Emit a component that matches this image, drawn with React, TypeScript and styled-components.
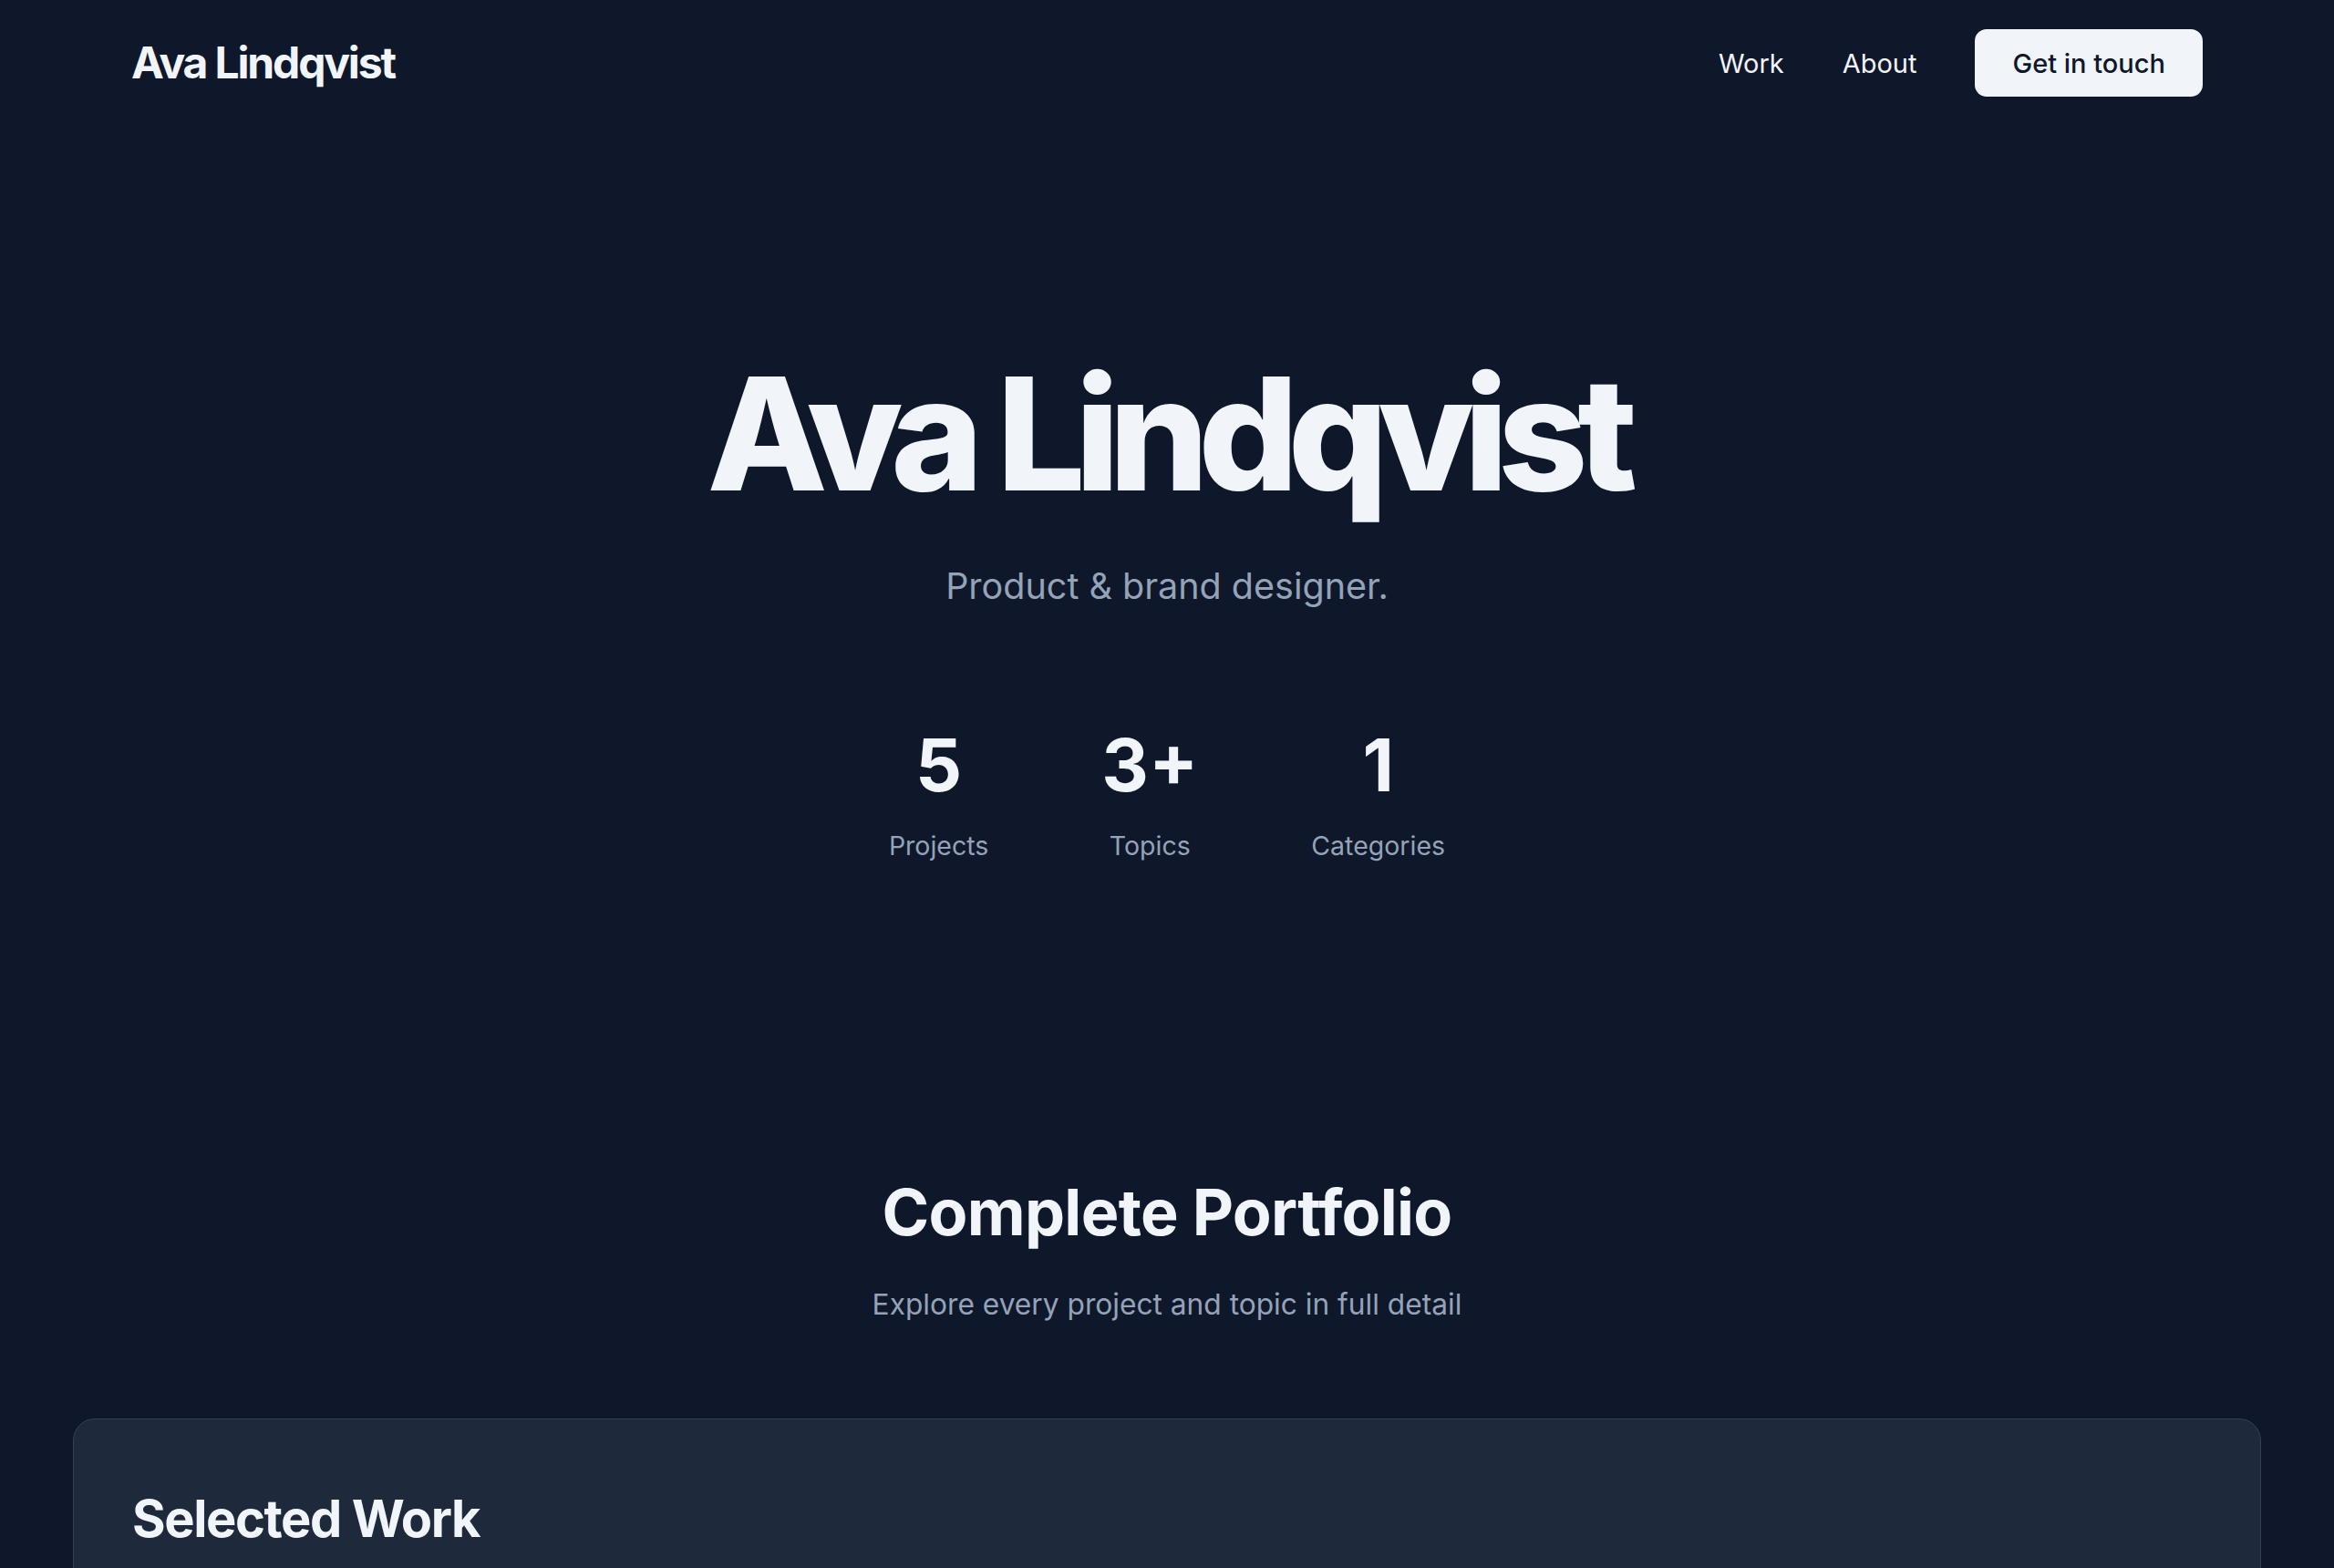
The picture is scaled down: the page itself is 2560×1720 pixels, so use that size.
import styled, { createGlobalStyle } from 'styled-components'

const GlobalStyle = createGlobalStyle`
  * {
    box-sizing: border-box;
  }
  html, body {
    margin: 0;
    padding: 0;
    background: #0f172a;
  }
  body {
    font-family: Inter, "Noto Sans", "Liberation Sans", sans-serif;
    color: #f1f5f9;
    -webkit-font-smoothing: antialiased;
  }
`

const Page = styled.div`
  height: 100vh;
  overflow: hidden;
  background: #0f172a;
`

const Header = styled.header`
  display: flex;
  align-items: center;
  justify-content: space-between;
  height: 138px;
  padding: 0 144px;
`

const Logo = styled.a`
  font-size: 48px;
  line-height: 1;
  font-weight: 700;
  letter-spacing: -0.045em;
  color: #f1f5f9;
  text-decoration: none;
`

const Nav = styled.nav`
  display: flex;
  align-items: center;
  gap: 64px;
`

const NavLink = styled.a`
  font-size: 29px;
  line-height: 1;
  color: #f1f5f9;
  text-decoration: none;
`

const ContactButton = styled.button`
  font-family: inherit;
  font-size: 29px;
  font-weight: 500;
  line-height: 1;
  color: #0f172a;
  background: #f1f5f9;
  border: none;
  border-radius: 13px;
  height: 74px;
  padding: 0 41px;
  cursor: pointer;
`

const Hero = styled.section`
  display: flex;
  flex-direction: column;
  align-items: center;
  padding-top: 251px;
`

const HeroTitle = styled.h1`
  margin: 0;
  font-size: 172px;
  line-height: 1;
  font-weight: 800;
  letter-spacing: -0.066em;
  color: #f1f5f9;
`

const Tagline = styled.p`
  margin: 63px 0 0;
  font-size: 39.5px;
  line-height: 1;
  color: #94a3b8;
`

const Stats = styled.div`
  display: flex;
  gap: 124px;
  margin-top: 135px;
`

const Stat = styled.div`
  display: flex;
  flex-direction: column;
  align-items: center;
`

const StatValue = styled.span`
  font-size: 80px;
  line-height: 1;
  font-weight: 700;
  color: #f1f5f9;
`

const StatLabel = styled.span`
  margin-top: 35px;
  font-size: 28.5px;
  line-height: 1;
  color: #94a3b8;
`

const Portfolio = styled.section`
  display: flex;
  flex-direction: column;
  align-items: center;
  padding: 353px 80px 0;
`

const SectionTitle = styled.h2`
  margin: 0;
  font-size: 70px;
  line-height: 1;
  font-weight: 700;
  letter-spacing: -0.01em;
  color: #f1f5f9;
`

const SectionLead = styled.p`
  margin: 50px 0 0;
  font-size: 31.7px;
  line-height: 1;
  color: #94a3b8;
`

const Card = styled.div`
  align-self: stretch;
  margin-top: 109px;
  min-height: 400px;
  padding: 81px 64px;
  background: #1e293b;
  border: 1px solid #334155;
  border-radius: 24px;
`

const CardTitle = styled.h3`
  margin: 0;
  font-size: 56px;
  line-height: 1;
  font-weight: 700;
  letter-spacing: -0.025em;
  color: #f1f5f9;
`

const stats = [
  { value: '5', label: 'Projects' },
  { value: '3+', label: 'Topics' },
  { value: '1', label: 'Categories' },
]

const App = () => {
  return (
    <Page>
      <GlobalStyle />
      <Header>
        <Logo href="#">Ava Lindqvist</Logo>
        <Nav>
          <NavLink href="#work">Work</NavLink>
          <NavLink href="#about">About</NavLink>
          <ContactButton>Get in touch</ContactButton>
        </Nav>
      </Header>
      <Hero>
        <HeroTitle>Ava Lindqvist</HeroTitle>
        <Tagline>Product &amp; brand designer.</Tagline>
        <Stats>
          {stats.map(s => (
            <Stat key={s.label}>
              <StatValue>{s.value}</StatValue>
              <StatLabel>{s.label}</StatLabel>
            </Stat>
          ))}
        </Stats>
      </Hero>
      <Portfolio>
        <SectionTitle>Complete Portfolio</SectionTitle>
        <SectionLead>Explore every project and topic in full detail</SectionLead>
        <Card>
          <CardTitle>Selected Work</CardTitle>
        </Card>
      </Portfolio>
    </Page>
  )
}

export default App
